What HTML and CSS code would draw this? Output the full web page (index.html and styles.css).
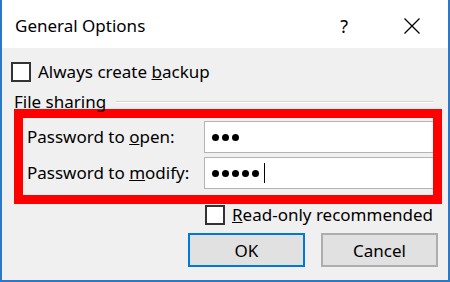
FILE: index.html
```html
<!DOCTYPE html>
<html lang="en">
<head>
    <meta charset="UTF-8">
    <title>General Options</title>
    <link rel="stylesheet" href="styles.css">
</head>
<body>
    <div class="window">
        <div class="title-bar">
            <span class="title">General Options</span>
            <span class="title-help">?</span>
            <span class="title-close">
                <svg width="18" height="18" viewBox="0 0 18 18">
                    <path d="M1.5 1.5 L16.5 16.5 M16.5 1.5 L1.5 16.5" stroke="#000" stroke-width="1.3" fill="none"/>
                </svg>
            </span>
        </div>

        <div class="dialog-body">
            <label class="check-row backup-row">
                <span class="check-box"></span>
                <span>Always create <u>b</u>ackup</span>
            </label>

            <div class="group-title">
                <span>File sharing</span>
                <span class="group-line"></span>
            </div>

            <div class="highlight">
                <div class="field-row">
                    <span class="field-label">Password to <u>o</u>pen:</span>
                    <div class="field-input">
                        <span class="dot"></span><span class="dot"></span><span class="dot"></span>
                    </div>
                </div>
                <div class="field-row">
                    <span class="field-label">Password to <u>m</u>odify:</span>
                    <div class="field-input">
                        <span class="dot"></span><span class="dot"></span><span class="dot"></span><span class="dot"></span><span class="dot"></span>
                        <span class="caret"></span>
                    </div>
                </div>
            </div>

            <label class="check-row readonly-row">
                <span class="check-box"></span>
                <span><u>R</u>ead-only recommended</span>
            </label>

            <div class="buttons">
                <button class="btn btn-default">OK</button>
                <button class="btn">Cancel</button>
            </div>
        </div>
    </div>
</body>
</html>
```

FILE: styles.css
```css
body {
    margin: 0;
    background: #fff;
    font-family: "Noto Sans", "Open Sans", sans-serif;
    font-size: 17px;
    line-height: 20px;
    color: #000;
}

.window {
    width: 450px;
    height: 282px;
    box-sizing: border-box;
    border-left: 2px solid #2b79c6;
    border-right: 2px solid #2b79c6;
    border-bottom: 2px solid #2b79c6;
    display: flex;
    flex-direction: column;
}

.title-bar {
    height: 48px;
    box-sizing: border-box;
    flex: none;
    background: #fff;
    display: flex;
    align-items: center;
    padding: 3px 0 0 13px;
}

.title {
    font-size: 17px;
    flex: 1;
}

.title-help {
    font-size: 18px;
    margin-right: 55px;
}

.title-close {
    display: flex;
    margin-right: 27px;
}

.dialog-body {
    flex: 1;
    background: #f0f0f0;
    padding: 14px 10px 0 12px;
}

.check-row {
    display: flex;
    align-items: center;
    gap: 7px;
}

.check-box {
    width: 20px;
    height: 20px;
    box-sizing: border-box;
    border: 2px solid #333;
    background: #fff;
}

.backup-row {
    margin-left: -3px;
}

.group-title {
    display: flex;
    align-items: center;
    margin-top: 11px;
    height: 18px;
}

.group-line {
    flex: 1;
    height: 1px;
    background: #d5d5d5;
    border-bottom: 1px solid #fff;
    margin: 0 5px 0 10px;
}

.highlight {
    margin: -2px -4px 0 0;
    border: 9px solid #ff0000;
    padding: 3px 0 6px 4px;
    display: flex;
    flex-direction: column;
    gap: 4px;
}

.field-row {
    display: flex;
    align-items: center;
}

.field-label {
    width: 177px;
}

.field-input {
    flex: 1;
    height: 32px;
    box-sizing: border-box;
    background: #fff;
    border: 1px solid #b4b4b4;
    border-right: none;
    display: flex;
    align-items: center;
    padding-left: 7px;
}

.dot {
    width: 7px;
    height: 7px;
    border-radius: 50%;
    background: #000;
    margin-right: 3px;
}

.caret {
    width: 1px;
    height: 20px;
    background: #000;
    margin-left: 2px;
}

.readonly-row {
    margin: 1px 0 0 191px;
}

.buttons {
    display: flex;
    justify-content: flex-end;
    gap: 16px;
    margin-top: 8px;
}

.btn {
    width: 117px;
    height: 34px;
    box-sizing: border-box;
    background: #e1e1e1;
    border: 2px solid #adadad;
    font-family: inherit;
    font-size: 17px;
    color: #000;
    padding: 0;
}

.btn-default {
    border-color: #0078d7;
}
```
